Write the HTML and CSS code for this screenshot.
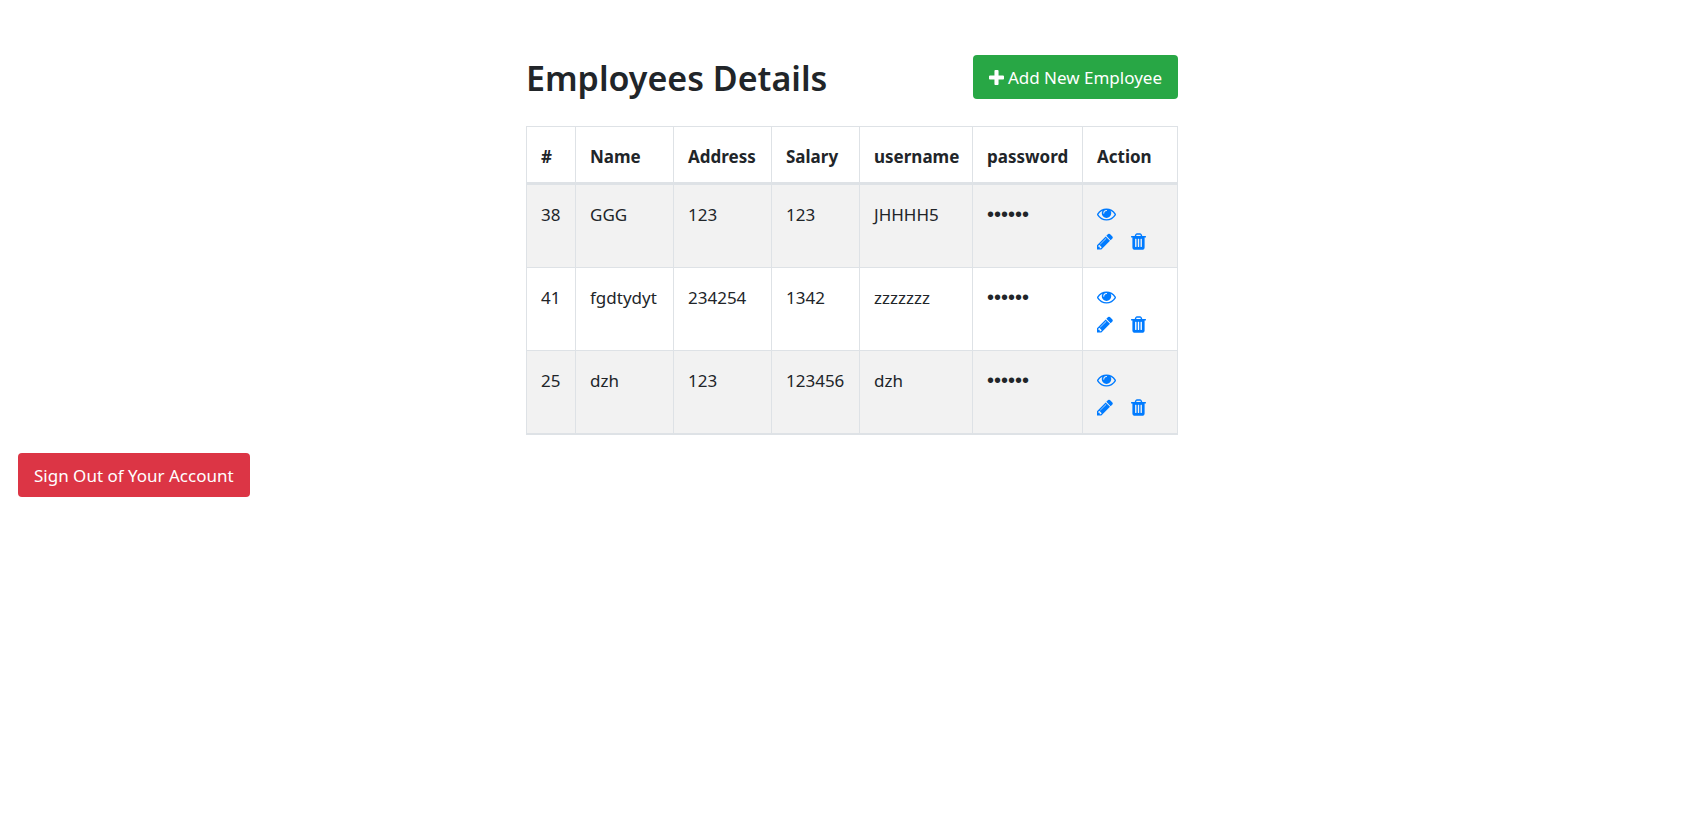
FILE: index.html
```html
<!DOCTYPE html>
<html lang="en">
<head>
<meta charset="utf-8">
<title>Employees Details</title>
<link rel="stylesheet" href="styles.css">
</head>
<body>
<svg class="sprite" aria-hidden="true">
  <symbol id="eye" viewBox="0 64 1792 1792"><path d="M1664 960q-152-236-381-353 61 104 61 225 0 185-131.500 316.500t-316.500 131.500-316.500-131.500-131.500-316.500q0-121 61-225-229 117-381 353 133 205 333.500 326.500t434.500 121.500 434.500-121.500 333.500-326.500zm-720-384q0-20-14-34t-34-14q-125 0-214.500 89.500t-89.500 214.500q0 20 14 34t34 14 34-14 14-34q0-86 61-147t147-61q20 0 34-14t14-34zm848 384q0 34-20 69-140 230-376.500 368.500t-499.500 138.500-499.500-139-376.500-368q-20-35-20-69t20-69q140-229 376.500-368t499.500-139 499.500 139 376.500 368q20 35 20 69z"/></symbol>
  <symbol id="pencil" viewBox="128 0 1536 1792"><path d="M491 1536l91-91-235-235-91 91v107h128v128h107zm523-928q0-22-22-22-10 0-17 7l-542 542q-7 7-7 17 0 22 22 22 10 0 17-7l542-542q7-7 7-17zm-54-192l416 416-832 832h-416v-416zm683 96q0 53-37 90l-166 166-416-416 166-165q36-38 90-38 53 0 91 38l235 234q37 39 37 91z"/></symbol>
  <symbol id="trash" viewBox="192 0 1408 1792"><path d="M704 1376v-704q0-14-9-23t-23-9h-64q-14 0-23 9t-9 23v704q0 14 9 23t23 9h64q14 0 23-9t9-23zm256 0v-704q0-14-9-23t-23-9h-64q-14 0-23 9t-9 23v704q0 14 9 23t23 9h64q14 0 23-9t9-23zm256 0v-704q0-14-9-23t-23-9h-64q-14 0-23 9t-9 23v704q0 14 9 23t23 9h64q14 0 23-9t9-23zm-544-992h448l-48-117q-7-9-17-11h-317q-10 2-17 11zm928 32v64q0 14-9 23t-23 9h-96v948q0 83-47 143.500t-113 60.500h-832q-66 0-113-58.500t-47-141.500v-952h-96q-14 0-23-9t-9-23v-64q0-14 9-23t23-9h309l70-167q15-37 54-63t79-26h320q40 0 79 26t54 63l70 167h309q14 0 23 9t9 23z"/></symbol>
  <symbol id="plus" viewBox="192 0 1408 1664"><path d="M1600 736v192q0 40-28 68t-68 28h-416v416q0 40-28 68t-68 28h-192q-40 0-68-28t-28-68v-416h-416q-40 0-68-28t-28-68v-192q0-40 28-68t68-28h416v-416q0-40 28-68t68-28h192q40 0 68 28t28 68v416h416q40 0 68 28t28 68z"/></symbol>
</svg>
<main class="wrapper">
  <header class="page-header">
    <h2 class="title">Employees Details</h2>
    <a class="btn btn-success" href="#add"><svg class="icon icon-narrow" aria-hidden="true"><use href="#plus"/></svg>Add New Employee</a>
  </header>
  <table class="table">
    <colgroup><col class="c-id"><col class="c-name"><col class="c-address"><col class="c-salary"><col class="c-user"><col class="c-pass"><col class="c-action"></colgroup>
    <thead>
      <tr><th>#</th><th>Name</th><th>Address</th><th>Salary</th><th>username</th><th>password</th><th>Action</th></tr>
    </thead>
    <tbody>
      <tr><td>38</td><td>GGG</td><td>123</td><td>123</td><td>JHHHH5</td><td class="secret">••••••</td>
        <td><div class="actions"><a href="#view-38" aria-label="View"><svg class="icon"><use href="#eye"/></svg></a><a href="#edit-38" aria-label="Edit"><svg class="icon icon-pencil"><use href="#pencil"/></svg></a><a href="#delete-38" aria-label="Delete"><svg class="icon icon-narrow"><use href="#trash"/></svg></a></div></td></tr>
      <tr><td>41</td><td>fgdtydyt</td><td>234254</td><td>1342</td><td>zzzzzzz</td><td class="secret">••••••</td>
        <td><div class="actions"><a href="#view-41" aria-label="View"><svg class="icon"><use href="#eye"/></svg></a><a href="#edit-41" aria-label="Edit"><svg class="icon icon-pencil"><use href="#pencil"/></svg></a><a href="#delete-41" aria-label="Delete"><svg class="icon icon-narrow"><use href="#trash"/></svg></a></div></td></tr>
      <tr><td>25</td><td>dzh</td><td>123</td><td>123456</td><td>dzh</td><td class="secret">••••••</td>
        <td><div class="actions"><a href="#view-25" aria-label="View"><svg class="icon"><use href="#eye"/></svg></a><a href="#edit-25" aria-label="Edit"><svg class="icon icon-pencil"><use href="#pencil"/></svg></a><a href="#delete-25" aria-label="Delete"><svg class="icon icon-narrow"><use href="#trash"/></svg></a></div></td></tr>
    </tbody>
  </table>
</main>
<footer class="account">
  <a class="btn btn-danger" href="#signout">Sign Out of Your Account</a>
</footer>
</body>
</html>
```
FILE: styles.css
```css
* {
  box-sizing: border-box;
}

body {
  margin: 0;
  font-family: "Noto Sans", "Open Sans", sans-serif;
  font-size: 17px;
  line-height: 27px;
  color: #212529;
  background: #fff;
}

.sprite {
  display: none;
}

.wrapper {
  max-width: 652px;
  margin: 0 auto;
  padding-top: 55px;
}

.page-header {
  display: flex;
  align-items: flex-start;
  justify-content: space-between;
  margin-bottom: 25px;
}

.title {
  margin: 0;
  font-size: 34px;
  line-height: 46px;
  font-weight: 600;
}

.btn {
  display: inline-flex;
  align-items: center;
  gap: 4px;
  padding: 9px 16px 8px;
  border-radius: 4px;
  color: #fff;
  text-decoration: none;
  white-space: nowrap;
}

.btn-success {
  background: #28a745;
}

.btn-danger {
  background: #dc3545;
}

.icon {
  display: block;
  width: 19px;
  height: 19px;
  fill: currentColor;
}

.icon-pencil {
  width: 16px;
}

.icon-narrow {
  width: 15px;
}

.table {
  width: 100%;
  table-layout: fixed;
  border-collapse: collapse;
}

.c-id { width: 49px; }
.c-name { width: 98px; }
.c-address { width: 98px; }
.c-salary { width: 88px; }
.c-user { width: 113px; }
.c-pass { width: 110px; }

.table th,
.table td {
  padding: 16px 0 12px 14px;
  border: 1px solid #dee2e6;
  text-align: left;
  vertical-align: top;
  white-space: nowrap;
}

.table th {
  font-weight: 700;
  border-bottom-width: 3px;
}

.table tbody tr:nth-child(odd) {
  background: #f2f2f2;
}

.table tbody tr:last-child td {
  border-bottom-width: 2px;
}

.table .secret {
  font-family: "Liberation Sans", sans-serif;
  font-size: 20px;
}

.actions {
  display: grid;
  grid-template-columns: 16px 15px;
  grid-auto-rows: 27px;
  column-gap: 18px;
  align-items: center;
}

.actions a {
  color: #007bff;
}

.actions a:first-child {
  grid-column: 1 / -1;
}

.account {
  padding: 18px;
}
```
